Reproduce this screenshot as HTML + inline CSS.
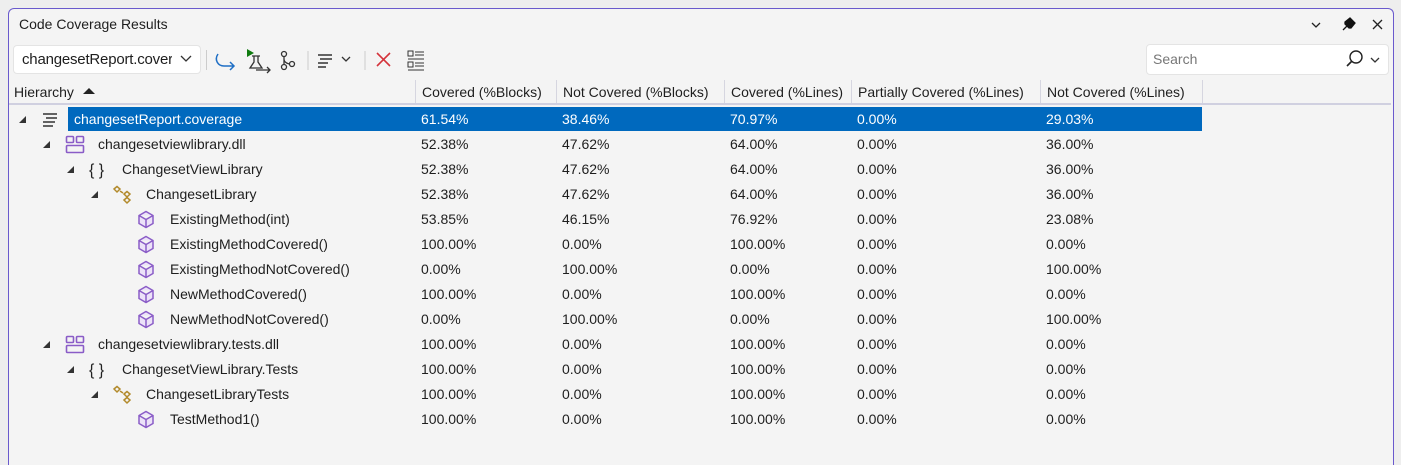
<!DOCTYPE html>
<html><head><meta charset="utf-8"><style>
*{margin:0;padding:0;box-sizing:border-box}
html,body{width:1401px;height:465px;overflow:hidden}
body{background:#eeeeee;font-family:"Liberation Sans",sans-serif;font-size:14px;color:#1e1e1e;position:relative}
.win{position:absolute;left:8px;top:8px;width:1386px;height:470px;border:1px solid #6a5acd;border-bottom:none;border-radius:6px 6px 0 0;background:#f4f4f4}
.a{position:absolute;white-space:nowrap}
.hdr{position:absolute;top:80px;height:24px;line-height:24px;border-left:1px solid #d6d6e0;padding-left:6px;font-size:14px}
.row{position:absolute;left:0;height:25px;line-height:25px;width:1401px}
.row span{position:absolute;white-space:nowrap}
.sel{position:absolute;left:68px;top:107px;width:1134px;height:24px;background:#0069be}
.tri{position:absolute;width:0;height:0;border-left:7px solid transparent;border-bottom:7px solid #333}
</style></head><body>
<div class="win"></div>
<div class="a" style="left:19px;top:16px;font-size:14px">Code Coverage Results</div>
<svg class="a" style="left:1310px;top:16px" width="80" height="18" viewBox="0 0 80 18">
<path d="M2 7l4 4 4-4" fill="none" stroke="#222" stroke-width="1.3"/>
<path d="M33 14l4-4M35 6l5-4 5 5-4 5-2 0-4-4z" fill="#111" stroke="#111" stroke-width="1.3"/>
<path d="M63 4l9 9M72 4l-9 9" stroke="#222" stroke-width="1.3"/>
</svg>
<div class="a" style="left:13px;top:45px;width:188px;height:29px;background:#fff;border:1px solid #e4e4e4;border-radius:4px"></div>
<div class="a" style="left:22px;top:51px;width:150px;overflow:hidden;font-size:15px;letter-spacing:-0.2px">changesetReport.coverage</div>
<svg class="a" style="left:180px;top:55px" width="12" height="8"><path d="M1 1l5 5 5-5" fill="none" stroke="#333" stroke-width="1.3"/></svg>
<div class="a" style="left:206px;top:50px;width:1px;height:20px;background:#ccc"></div>
<svg class="a" style="left:212px;top:46px" width="230" height="28" viewBox="0 0 230 28">
<path d="M6 8c-4 6 0 12 6 12h10M18 16l4 4-4 4" fill="none" stroke="#1f6fc5" stroke-width="1.5"/>
<path d="M35 3l7 4-7 4z" fill="#0f7b0f"/><path d="M42 10v6l-4 6h12l-4-6v-6M40 10h8M44 24h14M55 21l3 3-3 3" fill="none" stroke="#333" stroke-width="1.3"/>
<circle cx="72" cy="8" r="2.5" fill="none" stroke="#333" stroke-width="1.3"/><circle cx="72" cy="21" r="2.5" fill="none" stroke="#333" stroke-width="1.3"/><circle cx="80" cy="18" r="2.5" fill="none" stroke="#333" stroke-width="1.3"/><path d="M72 10v8M72 13c0 4 5 5 6 5" fill="none" stroke="#333" stroke-width="1.3"/>
<line x1="96" y1="5" x2="96" y2="24" stroke="#ccc"/>
<path d="M106 9h14M108 13h12M106 17h10M106 21h8" stroke="#333" stroke-width="1.5"/>
<path d="M130 11l4 4 4-4" fill="none" stroke="#333" stroke-width="1.3"/>
<line x1="153" y1="5" x2="153" y2="24" stroke="#ccc"/>
<path d="M165 7l13 13M178 7l-13 13" stroke="#d4333b" stroke-width="1.6"/>
<rect x="196" y="5" width="5" height="5" fill="none" stroke="#333"/><rect x="196" y="16" width="5" height="5" fill="none" stroke="#333"/>
<path d="M203 6h9M203 9h9M196 13h16M203 17h9M203 20h9M196 24h16" stroke="#333" stroke-width="1"/>
</svg>
<div class="a" style="left:1146px;top:44px;width:243px;height:31px;background:#fff;border:1px solid #e4e4e4;border-radius:4px"></div>
<div class="a" style="left:1153px;top:51px;color:#777;font-size:14px">Search</div>
<svg class="a" style="left:1343px;top:49px" width="45" height="20"><circle cx="13" cy="8" r="6" fill="none" stroke="#222" stroke-width="1.4"/><path d="M9 12l-5 5" stroke="#222" stroke-width="1.6"/><path d="M28 9l4 4 4-4" fill="none" stroke="#333" stroke-width="1.3"/></svg>
<div class="hdr" style="left:8px;border-left:none">Hierarchy</div>
<svg class="a" style="left:83px;top:87px" width="12" height="8"><path d="M0 7l6-6 6 6z" fill="#222"/></svg>
<div class="hdr" style="left:415px">Covered (%Blocks)</div>
<div class="hdr" style="left:556px">Not Covered (%Blocks)</div>
<div class="hdr" style="left:724px">Covered (%Lines)</div>
<div class="hdr" style="left:851px">Partially Covered (%Lines)</div>
<div class="hdr" style="left:1040px">Not Covered (%Lines)</div>
<div class="hdr" style="left:1202px;width:1px;padding:0"></div>
<div class="a" style="left:9px;top:103px;width:1382px;height:2px;background:#d0d0e0"></div>
<div class="sel"></div>
<div id="rows"></div>
<script>
var R=[
[0,1,'s','changesetReport.coverage','61.54%','38.46%','70.97%','0.00%','29.03%'],
[1,1,'d','changesetviewlibrary.dll','52.38%','47.62%','64.00%','0.00%','36.00%'],
[2,1,'n','ChangesetViewLibrary','52.38%','47.62%','64.00%','0.00%','36.00%'],
[3,1,'c','ChangesetLibrary','52.38%','47.62%','64.00%','0.00%','36.00%'],
[4,0,'m','ExistingMethod(int)','53.85%','46.15%','76.92%','0.00%','23.08%'],
[4,0,'m','ExistingMethodCovered()','100.00%','0.00%','100.00%','0.00%','0.00%'],
[4,0,'m','ExistingMethodNotCovered()','0.00%','100.00%','0.00%','0.00%','100.00%'],
[4,0,'m','NewMethodCovered()','100.00%','0.00%','100.00%','0.00%','0.00%'],
[4,0,'m','NewMethodNotCovered()','0.00%','100.00%','0.00%','0.00%','100.00%'],
[1,1,'d','changesetviewlibrary.tests.dll','100.00%','0.00%','100.00%','0.00%','0.00%'],
[2,1,'n','ChangesetViewLibrary.Tests','100.00%','0.00%','100.00%','0.00%','0.00%'],
[3,1,'c','ChangesetLibraryTests','100.00%','0.00%','100.00%','0.00%','0.00%'],
[4,0,'m','TestMethod1()','100.00%','0.00%','100.00%','0.00%','0.00%']];
var I={
s:'<path d="M2 4h14M5 8h11M2 12h12M2 16h10" stroke="#333" stroke-width="1.5"/>',
d:'<rect x="1.5" y="1.5" width="7" height="6" rx="1" fill="none" stroke="#8a5cc7" stroke-width="1.6"/><rect x="11.5" y="1.5" width="7" height="6" rx="1" fill="none" stroke="#8a5cc7" stroke-width="1.6"/><rect x="1.5" y="10.5" width="17" height="7" rx="1" fill="none" stroke="#8a5cc7" stroke-width="1.6"/>',
n:'<text x="0" y="15" font-size="16" font-family="Liberation Sans" fill="#222">{ }</text>',
c:'<path d="M1 4l3-2.5 3 2.5-3 3zM7 6l3 2M11 9l3-2.5 3 2.5-3 3zM11 15l3-2.5 3 2.5-3 3zM14 12v1" fill="none" stroke="#b28a2c" stroke-width="1.5"/>',
m:'<path d="M9 1.5l7 4v8l-7 4-7-4v-8zM2 5.5L9 9.5l7-4M9 9.5v8" fill="#ece2f8" stroke="#8a5cc7" stroke-width="1.5"/>'};
var X=[421,562,730,857,1046],h='';
R.forEach(function(r,i){var y=107+i*25,l=r[0]*24,sel=i==0,c=sel?'#fff':'#1e1e1e';
h+='<div class="row" style="top:'+y+'px;color:'+c+'">';
if(r[1])h+='<div class="tri" style="left:'+(19+l)+'px;top:9px"></div>';
h+='<svg style="position:absolute;left:'+(41+l)+'px;top:3px" width="20" height="20">'+I[r[2]]+'</svg>';
h+='<span style="left:'+(74+l)+'px">'+r[3]+'</span>';
for(var k=0;k<5;k++)h+='<span style="left:'+X[k]+'px">'+r[4+k]+'</span>';
h+='</div>';});
document.getElementById('rows').innerHTML=h;
</script>
</body></html>
